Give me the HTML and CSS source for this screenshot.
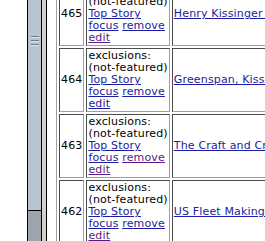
FILE: index.html
```html
<!DOCTYPE html>
<html>
<head>
<meta http-equiv="Content-Type" content="text/html; charset=utf-8"/>
<title>Story exclusions</title>
<link rel="stylesheet" href="styles.css">
</head>
<body>
<div class="frames">
  <div class="nav-frame">
    <div class="nav-blank"></div>
    <div class="scrollbar">
      <div class="thumb">
        <div class="grip"></div>
        <div class="grip"></div>
        <div class="grip"></div>
      </div>
      <div class="track"></div>
    </div>
  </div>
  <div class="frame-border"></div>
  <div class="main-frame">
    <table class="stories">
      <tr>
        <td class="num">465</td>
        <td class="actions">exclusions:<br>(not-featured)<br><a href="#">Top Story</a><br><a href="#">focus</a> <a href="#">remove</a><br><a class="visited" href="#">edit</a></td>
        <td class="title"><a href="#">Henry Kissinger to Testify on Iraq</a></td>
      </tr>
      <tr>
        <td class="num">464</td>
        <td class="actions">exclusions:<br>(not-featured)<br><a href="#">Top Story</a><br><a href="#">focus</a> <a href="#">remove</a><br><a href="#">edit</a></td>
        <td class="title"><a href="#">Greenspan, Kissinger Meet on Budget</a></td>
      </tr>
      <tr>
        <td class="num">463</td>
        <td class="actions">exclusions:<br>(not-featured)<br><a href="#">Top Story</a><br><a href="#">focus</a> <a class="visited" href="#">remove</a><br><a class="visited" href="#">edit</a></td>
        <td class="title"><a href="#">The Craft and Craftsmen of Diplomacy</a></td>
      </tr>
      <tr>
        <td class="num">462</td>
        <td class="actions">exclusions:<br>(not-featured)<br><a href="#">Top Story</a><br><a href="#">focus</a> <a href="#">remove</a><br><a class="visited" href="#">edit</a></td>
        <td class="title"><a href="#">US Fleet Making Port Call</a></td>
      </tr>
    </table>
  </div>
</div>
</body>
</html>
```

FILE: styles.css
```css
html, body {
   margin: 0;
   padding: 0;
   background-color: white;
   overflow: hidden;
}

body, td {
   font-family: 'DejaVu Sans', Verdana, sans-serif;
   font-size: 11px;
   line-height: 12px;
   letter-spacing: 0.15px;
   color: black;
}

a {
   color: #1c1ca0;
}

a.visited {
   color: #5a1a86;
}

.frames {
   display: flex;
   width: 265px;
   height: 241px;
}

.nav-frame {
   display: flex;
   width: 42px;
   flex: none;
}

.nav-blank {
   width: 27px;
   background-color: white;
}

.scrollbar {
   display: flex;
   flex-direction: column;
   width: 13px;
   border-left: 1px solid black;
   border-right: 1px solid black;
}

.thumb {
   height: 211px;
   background-color: #b9c4cf;
   border-bottom: 1px solid black;
   display: flex;
   flex-direction: column;
   align-items: center;
   padding-top: 36px;
   box-sizing: border-box;
}

.grip {
   width: 8px;
   height: 1px;
   background-color: #6d7c8b;
   border-bottom: 1px solid #dfe5eb;
   margin-bottom: 2px;
}

.track {
   flex: 1;
   background-color: #9ea5ad;
}

.frame-border {
   width: 4px;
   flex: none;
   background-color: #d4d0c8;
   border-right: 1px solid black;
}

.main-frame {
   flex: 1;
   padding-left: 9px;
   overflow: hidden;
}

.stories {
   margin-top: -21px;
   border: 1px outset #a0a0a0;
   border-spacing: 2px;
}

.stories td {
   border: 1px inset #a0a0a0;
   padding: 1px;
   vertical-align: middle;
}

td.actions {
   white-space: nowrap;
}

td.title {
   white-space: nowrap;
}
```
